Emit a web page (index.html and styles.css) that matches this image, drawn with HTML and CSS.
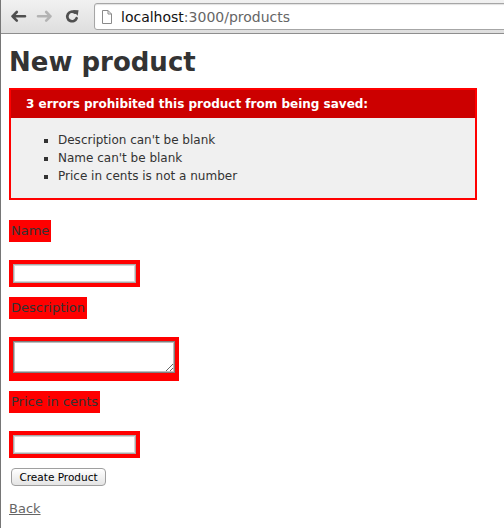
FILE: index.html
```html
<!DOCTYPE html>
<html>
<head>
<meta charset="utf-8">
<title>Products</title>
<link rel="stylesheet" href="styles.css">
</head>
<body>
<div class="window">
  <div class="toolbar">
    <svg class="navicons" width="93" height="33" viewBox="1 0 93 33">
      <path d="M25 16.3 H12.5 M16.8 12 L12.5 16.3 L16.8 20.6" fill="none" stroke="#4f4f4f" stroke-width="2.6" stroke-linecap="round" stroke-linejoin="round"/>
      <path d="M38 16.3 H50.5 M46.2 12 L50.5 16.3 L46.2 20.6" fill="none" stroke="#b3b3b3" stroke-width="2.6" stroke-linecap="round" stroke-linejoin="round"/>
      <path d="M76.6 18.2 A4.8 4.8 0 1 1 75 12.6" fill="none" stroke="#4f4f4f" stroke-width="2.7" stroke-linecap="round"/>
      <path d="M72.8 10 L78.6 10.2 L77.6 15.8 Z" fill="#4f4f4f"/>
    </svg>
    <div class="omnibox">
      <svg class="pageicon" width="10" height="14" viewBox="0 0 10 14">
        <path d="M0.5 0.5 H6 L9.5 4 V13.5 H0.5 Z" fill="#fff" stroke="#8a8a8a"/>
        <path d="M6 0.5 V4 H9.5" fill="none" stroke="#8a8a8a"/>
      </svg>
      <span class="host">localhost</span><span class="path">:3000/products</span>
    </div>
  </div>
  <div class="page">
    <h1>New product</h1>
    <form class="product-form">
      <div class="errors">
        <h2>3 errors prohibited this product from being saved:</h2>
        <ul>
          <li>Description can't be blank</li>
          <li>Name can't be blank</li>
          <li>Price in cents is not a number</li>
        </ul>
      </div>
      <div class="field">
        <div class="fwe"><label for="product_name">Name</label></div><br>
        <div class="fwe"><input class="text" id="product_name" type="text"></div>
      </div>
      <div class="field">
        <div class="fwe"><label for="product_description">Description</label></div><br>
        <div class="fwe"><textarea class="area" id="product_description"></textarea></div>
      </div>
      <div class="field">
        <div class="fwe"><label for="product_price">Price in cents</label></div><br>
        <div class="fwe"><input class="text" id="product_price" type="text"></div>
      </div>
      <div class="actions">
        <button class="submit" type="button">Create Product</button>
      </div>
    </form>
    <a class="back" href="#">Back</a>
  </div>
</div>
</body>
</html>
```
FILE: styles.css
```css
html, body {
  margin: 0;
  padding: 0;
  background: #fff;
}
.window {
  min-height: 528px;
  border-left: 1px solid #767676;
  font-family: "DejaVu Sans", Verdana, sans-serif;
  color: #333;
}
.toolbar {
  display: flex;
  align-items: center;
  height: 33px;
  border-bottom: 1px solid #8e8e8e;
  background: linear-gradient(#f1f1f1, #dedede);
  overflow: hidden;
}
.navicons {
  display: block;
  flex: none;
}
.omnibox {
  flex: 1;
  display: flex;
  align-items: center;
  height: 27px;
  box-sizing: border-box;
  margin-right: -12px;
  padding-left: 7px;
  border: 1px solid #a6a6a6;
  border-radius: 3px;
  background: #fff;
  box-shadow: inset 0 1px 1px rgba(0,0,0,0.12);
  font-size: 14px;
  white-space: nowrap;
}
.pageicon {
  display: block;
  flex: none;
  margin-right: 9px;
}
.host { color: #111; }
.path { color: #666; }

.page {
  padding: 0 8px;
  font-size: 13px;
  line-height: 18px;
}
h1 {
  margin: 19px 0 17px;
  font-size: 26px;
  line-height: 18px;
  font-weight: bold;
  color: #333;
}
.product-form { margin: 0; }
.errors {
  width: 450px;
  border: 2px solid #f00;
  padding: 7px 7px 0;
  margin-bottom: 20px;
  background: #f0f0f0;
}
.errors h2 {
  margin: -7px -7px 0;
  padding: 5px 5px 5px 15px;
  font-size: 12px;
  line-height: 18px;
  font-weight: bold;
  background: #c00;
  color: #fff;
}
.errors ul {
  margin: 13px 0;
  padding-left: 40px;
}
.errors li {
  font-size: 12px;
  list-style: square;
}
.field {
  margin-bottom: 10px;
  line-height: 18px;
}
.fwe {
  display: table;
  padding: 2px;
  background: #f00;
}
.text {
  display: block;
  box-sizing: border-box;
  width: 123px;
  height: 19px;
  margin: 2px;
  padding: 1px 3px;
  border: 1px solid #a9a9a9;
  box-shadow: inset 0 0 0 1px #d6d6d6;
  background: #fff;
  font: 13px "DejaVu Sans", sans-serif;
  outline: none;
}
.area {
  display: block;
  box-sizing: border-box;
  width: 162px;
  height: 32px;
  margin: 2px 2px 6px;
  padding: 2px;
  border: 1px solid #7f7f7f;
  box-shadow: inset 0 0 0 1px #bdbdbd;
  background: #fff;
  font: 13px "DejaVu Sans", sans-serif;
  outline: none;
}
.actions {
  margin-bottom: 10px;
}
.submit {
  display: block;
  box-sizing: border-box;
  width: 95px;
  height: 18px;
  margin: 3px 0 0 2px;
  padding: 0;
  border: 1px solid #9f9f9f;
  border-radius: 4px;
  background: linear-gradient(#ffffff, #e4e4e4);
  color: #000;
  font: 10.5px/16px "DejaVu Sans", sans-serif;
}
.back {
  display: block;
  width: max-content;
  margin-top: 14px;
  color: #666;
  text-decoration: underline;
}
```
